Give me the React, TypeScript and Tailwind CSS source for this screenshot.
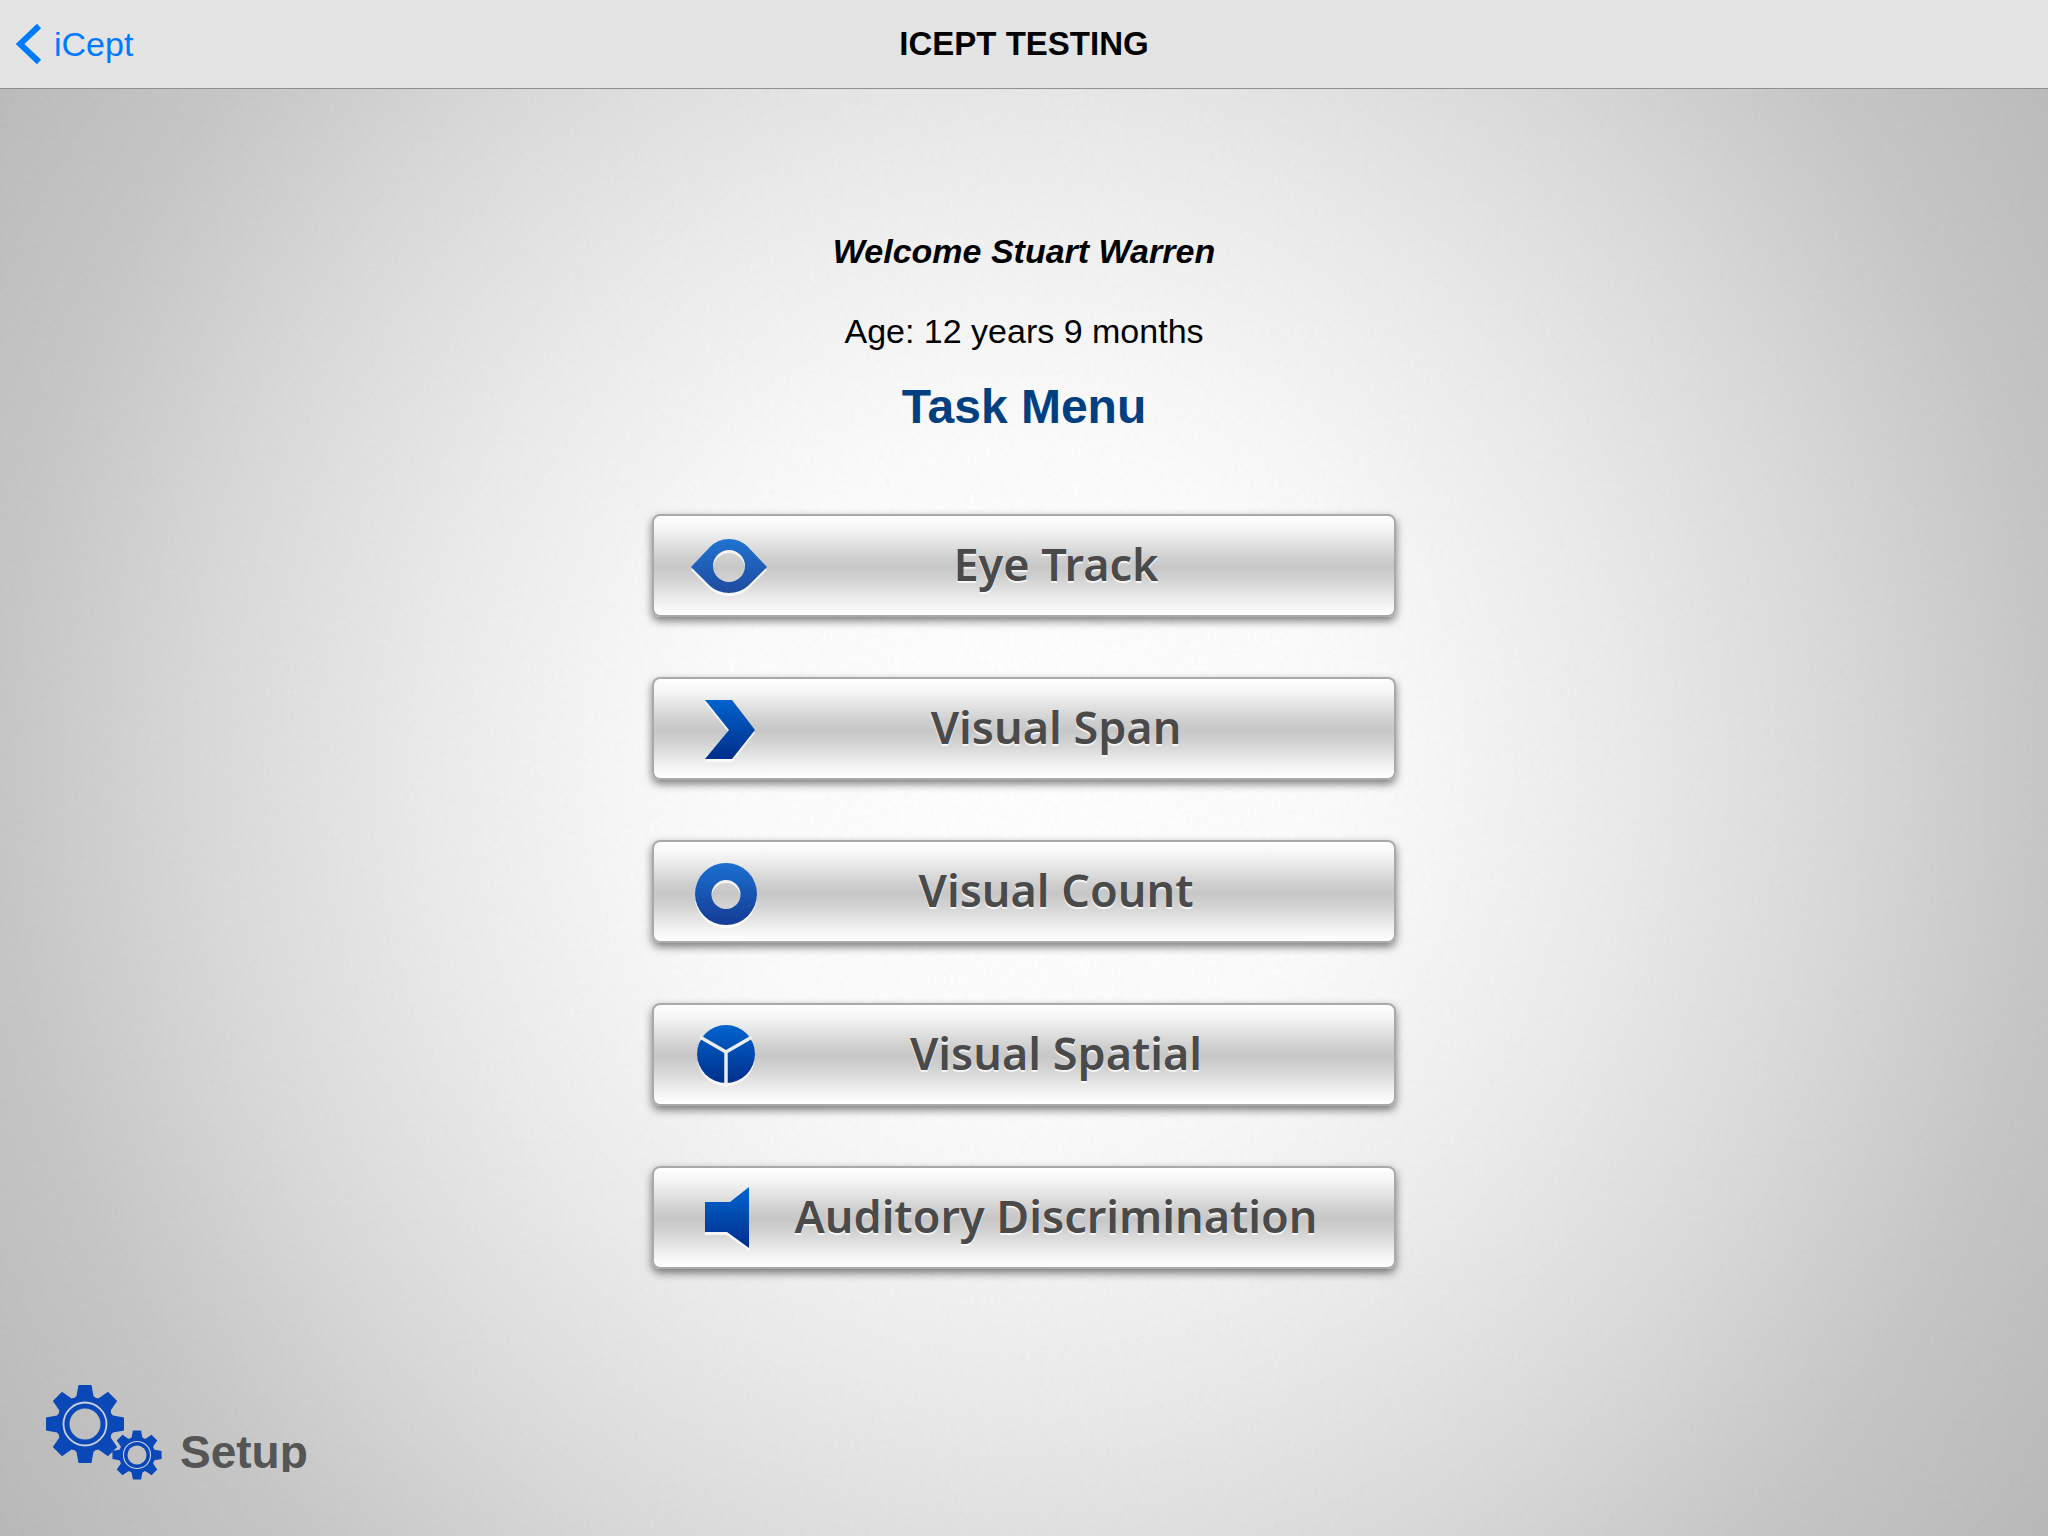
import React from "react";

const EyeIcon = () => (
  <path
    fillRule="evenodd"
    d="M9 41 L28 21 Q36 13 47 13 Q58 13 66 21 L85 41 L66 60 Q58 67 47 67 Q36 67 28 60 Z M47 24 a16 16 0 1 0 0 32 a16 16 0 1 0 0 -32 Z"
  />
);

const ChevronIcon = () => <path d="M23 11 H50 L73 41 L50 70 H23 L47 41 Z" />;

const RingIcon = () => (
  <path
    fillRule="evenodd"
    d="M44 11 a31 31 0 1 0 0 62 a31 31 0 1 0 0 -62 Z M44 28 a14.5 14.5 0 1 0 0 29 a14.5 14.5 0 1 0 0 -29 Z"
  />
);

const PieIcon = () => (
  <>
    <circle cx="44" cy="39" r="29" />
    <path
      d="M18 22 L44 37 L70 22 M44 37 V69"
      fill="none"
      stroke="#ececec"
      strokeWidth="3.5"
    />
  </>
);

const SpeakerIcon = () => <path d="M23 24 H48 L67 9 V70 L45 54 H23 Z" />;

const tasks = [
  { name: "Eye Track", Icon: EyeIcon, from: "#1f74d2", to: "#1f4a9e" },
  { name: "Visual Span", Icon: ChevronIcon, from: "#0062cc", to: "#002f8c" },
  { name: "Visual Count", Icon: RingIcon, from: "#1a6fd0", to: "#153f98" },
  { name: "Visual Spatial", Icon: PieIcon, from: "#0062cc", to: "#002f8c" },
  {
    name: "Auditory Discrimination",
    Icon: SpeakerIcon,
    from: "#0062cc",
    to: "#002f8c",
  },
];

const teeth = [0, 45, 90, 135, 180, 225, 270, 315];

const Gear = ({ transform }: { transform: string }) => (
  <g transform={transform}>
    {teeth.map((angle) => (
      <path
        key={angle}
        d="M-6.5 -39 H6.5 L8.5 -28 L13 -24 H-13 L-8.5 -28 Z"
        fill="#0a48b8"
        transform={`rotate(${angle})`}
      />
    ))}
    <circle r="21" fill="none" stroke="#0a48b8" strokeWidth="14" />
    <circle r="21.5" fill="none" stroke="#c8cede" strokeWidth="1.8" />
  </g>
);

const GearsIcon = () => (
  <svg width="120" height="100" viewBox="0 0 120 100" aria-hidden="true">
    <defs>
      <mask id="gear-holes">
        <rect width="120" height="100" fill="#fff" />
        <circle cx="41" cy="40" r="15.5" fill="#000" />
        <circle cx="93" cy="71" r="9.5" fill="#000" />
      </mask>
    </defs>
    <g mask="url(#gear-holes)">
      <Gear transform="translate(41 40)" />
      <Gear transform="translate(93 71) scale(0.63)" />
    </g>
  </svg>
);

const App = () => {
  return (
    <div className="relative isolate flex min-h-screen flex-col bg-[radial-gradient(ellipse_58%_82%_at_50%_50%,#ffffff_0%,#fcfcfc_26%,#f8f8f8_33%,#ebebeb_50%,#dadada_68%,#c6c6c6_86%,#b8b8b8_106%)] font-['Liberation_Sans',Arial,sans-serif] text-black">
      {/* paper grain */}
      <svg
        className="absolute inset-0 -z-10 h-full w-full opacity-6"
        aria-hidden="true"
      >
        <filter id="grain">
          <feTurbulence
            type="fractalNoise"
            baseFrequency="0.2"
            numOctaves="2"
          />
          <feColorMatrix type="saturate" values="0" />
        </filter>
        <rect width="100%" height="100%" filter="url(#grain)" />
      </svg>

      <header className="grid h-[89px] grid-cols-3 items-center border-b border-[#8f8f8f] bg-[#e4e4e4] px-4 text-[34px]">
        <a href="#icept" className="flex items-center gap-3 text-[#007aff]">
          <svg width="26" height="42" viewBox="0 0 26 42" aria-hidden="true">
            <path
              d="M23 3 L4 21 L23 39"
              fill="none"
              stroke="currentColor"
              strokeWidth="6"
            />
          </svg>
          iCept
        </a>
        <h1 className="text-center text-[33px] font-bold">ICEPT TESTING</h1>
      </header>

      <main className="flex flex-1 flex-col items-center pt-[142px] text-center">
        <p className="text-[34px] leading-10 font-bold italic">
          Welcome Stuart Warren
        </p>
        <p className="mt-10 text-[34px] leading-10">Age: 12 years 9 months</p>
        <h2 className="mt-7 text-5xl leading-14 font-bold text-[#004080]">
          Task Menu
        </h2>

        <nav className="mt-[79px] flex w-[744px] flex-col gap-[60px]">
          {tasks.map(({ name, Icon, from, to }, i) => (
            <button
              key={name}
              type="button"
              className="flex h-[103px] w-full items-center rounded-lg border-2 border-[#a9a9a9] bg-[linear-gradient(#ffffff_0%,#f4f4f4_14%,#cfcfcf_42%,#c7c7c7_52%,#d2d2d2_64%,#f2f2f2_88%,#ffffff_100%)] pr-13 pl-7 shadow-[0_4px_8px_rgba(0,0,0,0.5)]"
            >
              <svg
                width="88"
                height="80"
                viewBox="0 0 88 80"
                className="shrink-0 drop-shadow-[0_3px_0_rgba(255,255,255,0.75)]"
                fill={`url(#task-${i})`}
                aria-hidden="true"
              >
                <defs>
                  <linearGradient
                    id={`task-${i}`}
                    gradientUnits="userSpaceOnUse"
                    x1="0"
                    y1="12"
                    x2="0"
                    y2="68"
                  >
                    <stop offset="0" stopColor={from} />
                    <stop offset="1" stopColor={to} />
                  </linearGradient>
                </defs>
                <Icon />
              </svg>
              <span className="flex-1 pb-1 font-['Noto_Sans','Open_Sans',sans-serif] text-[45px] leading-none font-semibold whitespace-nowrap text-[#4a4a4a] [text-shadow:0_2px_1px_rgba(255,255,255,0.8)]">
                {name}
              </span>
            </button>
          ))}
        </nav>
      </main>

      <footer className="px-11 pb-13">
        <button type="button" className="flex items-end gap-4">
          <GearsIcon />
          {/* the label's box ends just under the baseline */}
          <span className="mb-3 h-10 overflow-hidden text-[46px] leading-10 font-bold text-[#555555]">
            Setup
          </span>
        </button>
      </footer>
    </div>
  );
};

export default App;
